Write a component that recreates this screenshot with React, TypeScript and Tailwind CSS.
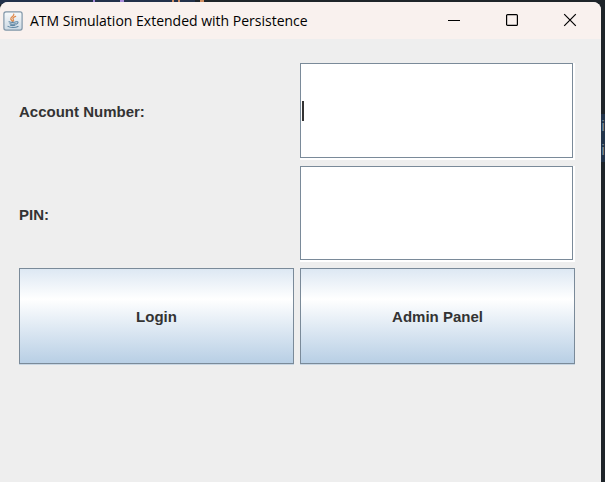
import type { ReactNode } from "react";

function JavaIcon() {
  return (
    <svg className="size-5 shrink-0" viewBox="0 0 20 20" fill="none" aria-hidden="true">
      <defs>
        <linearGradient id="tile" x1="0" y1="0" x2="0" y2="1">
          <stop offset="0" stopColor="#f8fafb" />
          <stop offset="1" stopColor="#ccd9e4" />
        </linearGradient>
      </defs>
      <rect x="0.9" y="0.9" width="18.2" height="18.2" rx="2" fill="url(#tile)" stroke="#8096a8" strokeWidth="1.2" />
      <path d="M10.8 3.2C11.4 5.2 7.2 5.7 7.8 8c.2.9 1.1 1.4 1.5 2.2M12.6 5.4c-2 .7-3.5 1.9-2.2 3.2.6.7.1 1.2-.4 1.7" stroke="#e08a4c" strokeWidth="1.3" strokeLinecap="round" />
      <path d="M6 10.7c1.8.7 5.2.7 7.2 0M6.9 12.7c1.7.6 4 .6 5.6 0M7.5 14.3c1.4.4 3.2.4 4.4 0M13.3 10.8c2.3-.6 2.3 1.6-.2 2.3" stroke="#5f86a3" strokeWidth="1.1" strokeLinecap="round" />
      <path d="M5 15.4c1.8 1.4 7.5 1.4 10 0" stroke="#5f86a3" strokeWidth="1.1" strokeLinecap="round" />
    </svg>
  );
}

function WindowButton({ label, children }: { label: string; children: ReactNode }) {
  return (
    <button type="button" aria-label={label} className="flex w-[58px] items-center justify-center self-stretch">
      <svg className="size-[14px]" viewBox="0 0 14 14" fill="none" stroke="#000000" aria-hidden="true">
        {children}
      </svg>
    </button>
  );
}

function TitleBar() {
  return (
    <header className="flex h-[37px] items-center bg-[#f9f1ee] pr-[2px] pl-[3px]">
      <JavaIcon />
      <h1 className="ml-[7px] flex-1 whitespace-nowrap font-['Open_Sans','Noto_Sans',sans-serif] text-[14px] leading-5 text-black">
        ATM Simulation Extended with Persistence
      </h1>
      <div className="flex self-stretch pb-[2px]">
        <WindowButton label="Minimize">
          <path d="M1 7.5h12" />
        </WindowButton>
        <WindowButton label="Maximize">
          <rect x="1.6" y="1.6" width="10.8" height="10.8" rx="1" strokeWidth="1.2" />
        </WindowButton>
        <WindowButton label="Close">
          <path d="M1.2 1.2l11.6 11.6M12.8 1.2L1.2 12.8" strokeWidth="1.2" />
        </WindowButton>
      </div>
    </header>
  );
}

function FieldLabel({ htmlFor, children }: { htmlFor: string; children: ReactNode }) {
  return (
    <label htmlFor={htmlFor} className="self-center pt-[2px] font-bold">
      {children}
    </label>
  );
}

function Field({ id, type, caret }: { id: string; type: string; caret?: boolean }) {
  return (
    <div className="relative border-r-2 border-b-2 border-white">
      <input
        id={id}
        type={type}
        className="block h-full w-full border border-[#7a8a99] bg-white px-1 text-[15px] text-[#333333] outline-none"
      />
      {caret && <span className="absolute top-1/2 left-[2px] h-5 w-[2px] -translate-y-1/2 bg-[#333333]" />}
    </div>
  );
}

function MetalButton({ children }: { children: ReactNode }) {
  return (
    <button
      type="button"
      className="border border-[#7a8a99] bg-linear-to-b from-[#dde8f3] via-white via-32% to-[#b8cfe5] pt-[2px] font-bold shadow-[0_1px_0_#c8d6e3]"
    >
      {children}
    </button>
  );
}

function Backdrop() {
  return (
    <div aria-hidden="true" className="absolute inset-0 bg-[#1e2429] font-['Liberation_Sans',Arial,sans-serif] text-[14px]">
      <div className="absolute top-0 left-0 h-1 w-[195px] bg-[#22314a]" />
      <div className="absolute top-[114px] right-0 w-1 bg-[#22344b] text-center leading-6 text-[#8b949e]">
        <div>i</div>
        <div>i</div>
      </div>
      <div className="absolute top-0 left-[93px] h-[2px] w-[2px] bg-[#a78bda]" />
      <div className="absolute top-0 left-[120px] h-[2px] w-1 bg-[#a78bda]" />
      <div className="absolute top-0 left-[172px] h-[2px] w-[2px] bg-[#d08c60]" />
      <div className="absolute top-0 left-[178px] h-[2px] w-[2px] bg-[#d08c60]" />
      <div className="absolute top-0 left-[200px] h-[2px] w-1 bg-[#d08c60]" />
    </div>
  );
}

export default function App() {
  return (
    <div className="relative flex min-h-screen flex-col pt-[2px] pr-1">
      <Backdrop />
      <main className="relative flex flex-1 flex-col overflow-hidden rounded-t-lg bg-[#eeeeee]">
        <TitleBar />
        <form className="grid grid-cols-2 grid-rows-[97px_96px_96px] gap-[6px] pt-6 pr-[26px] pl-[19px] font-['Liberation_Sans',Arial,sans-serif] text-[15px] text-[#333333]">
          <FieldLabel htmlFor="account">Account Number:</FieldLabel>
          <Field id="account" type="text" caret />
          <FieldLabel htmlFor="pin">PIN:</FieldLabel>
          <Field id="pin" type="password" />
          <MetalButton>Login</MetalButton>
          <MetalButton>Admin Panel</MetalButton>
        </form>
      </main>
    </div>
  );
}
